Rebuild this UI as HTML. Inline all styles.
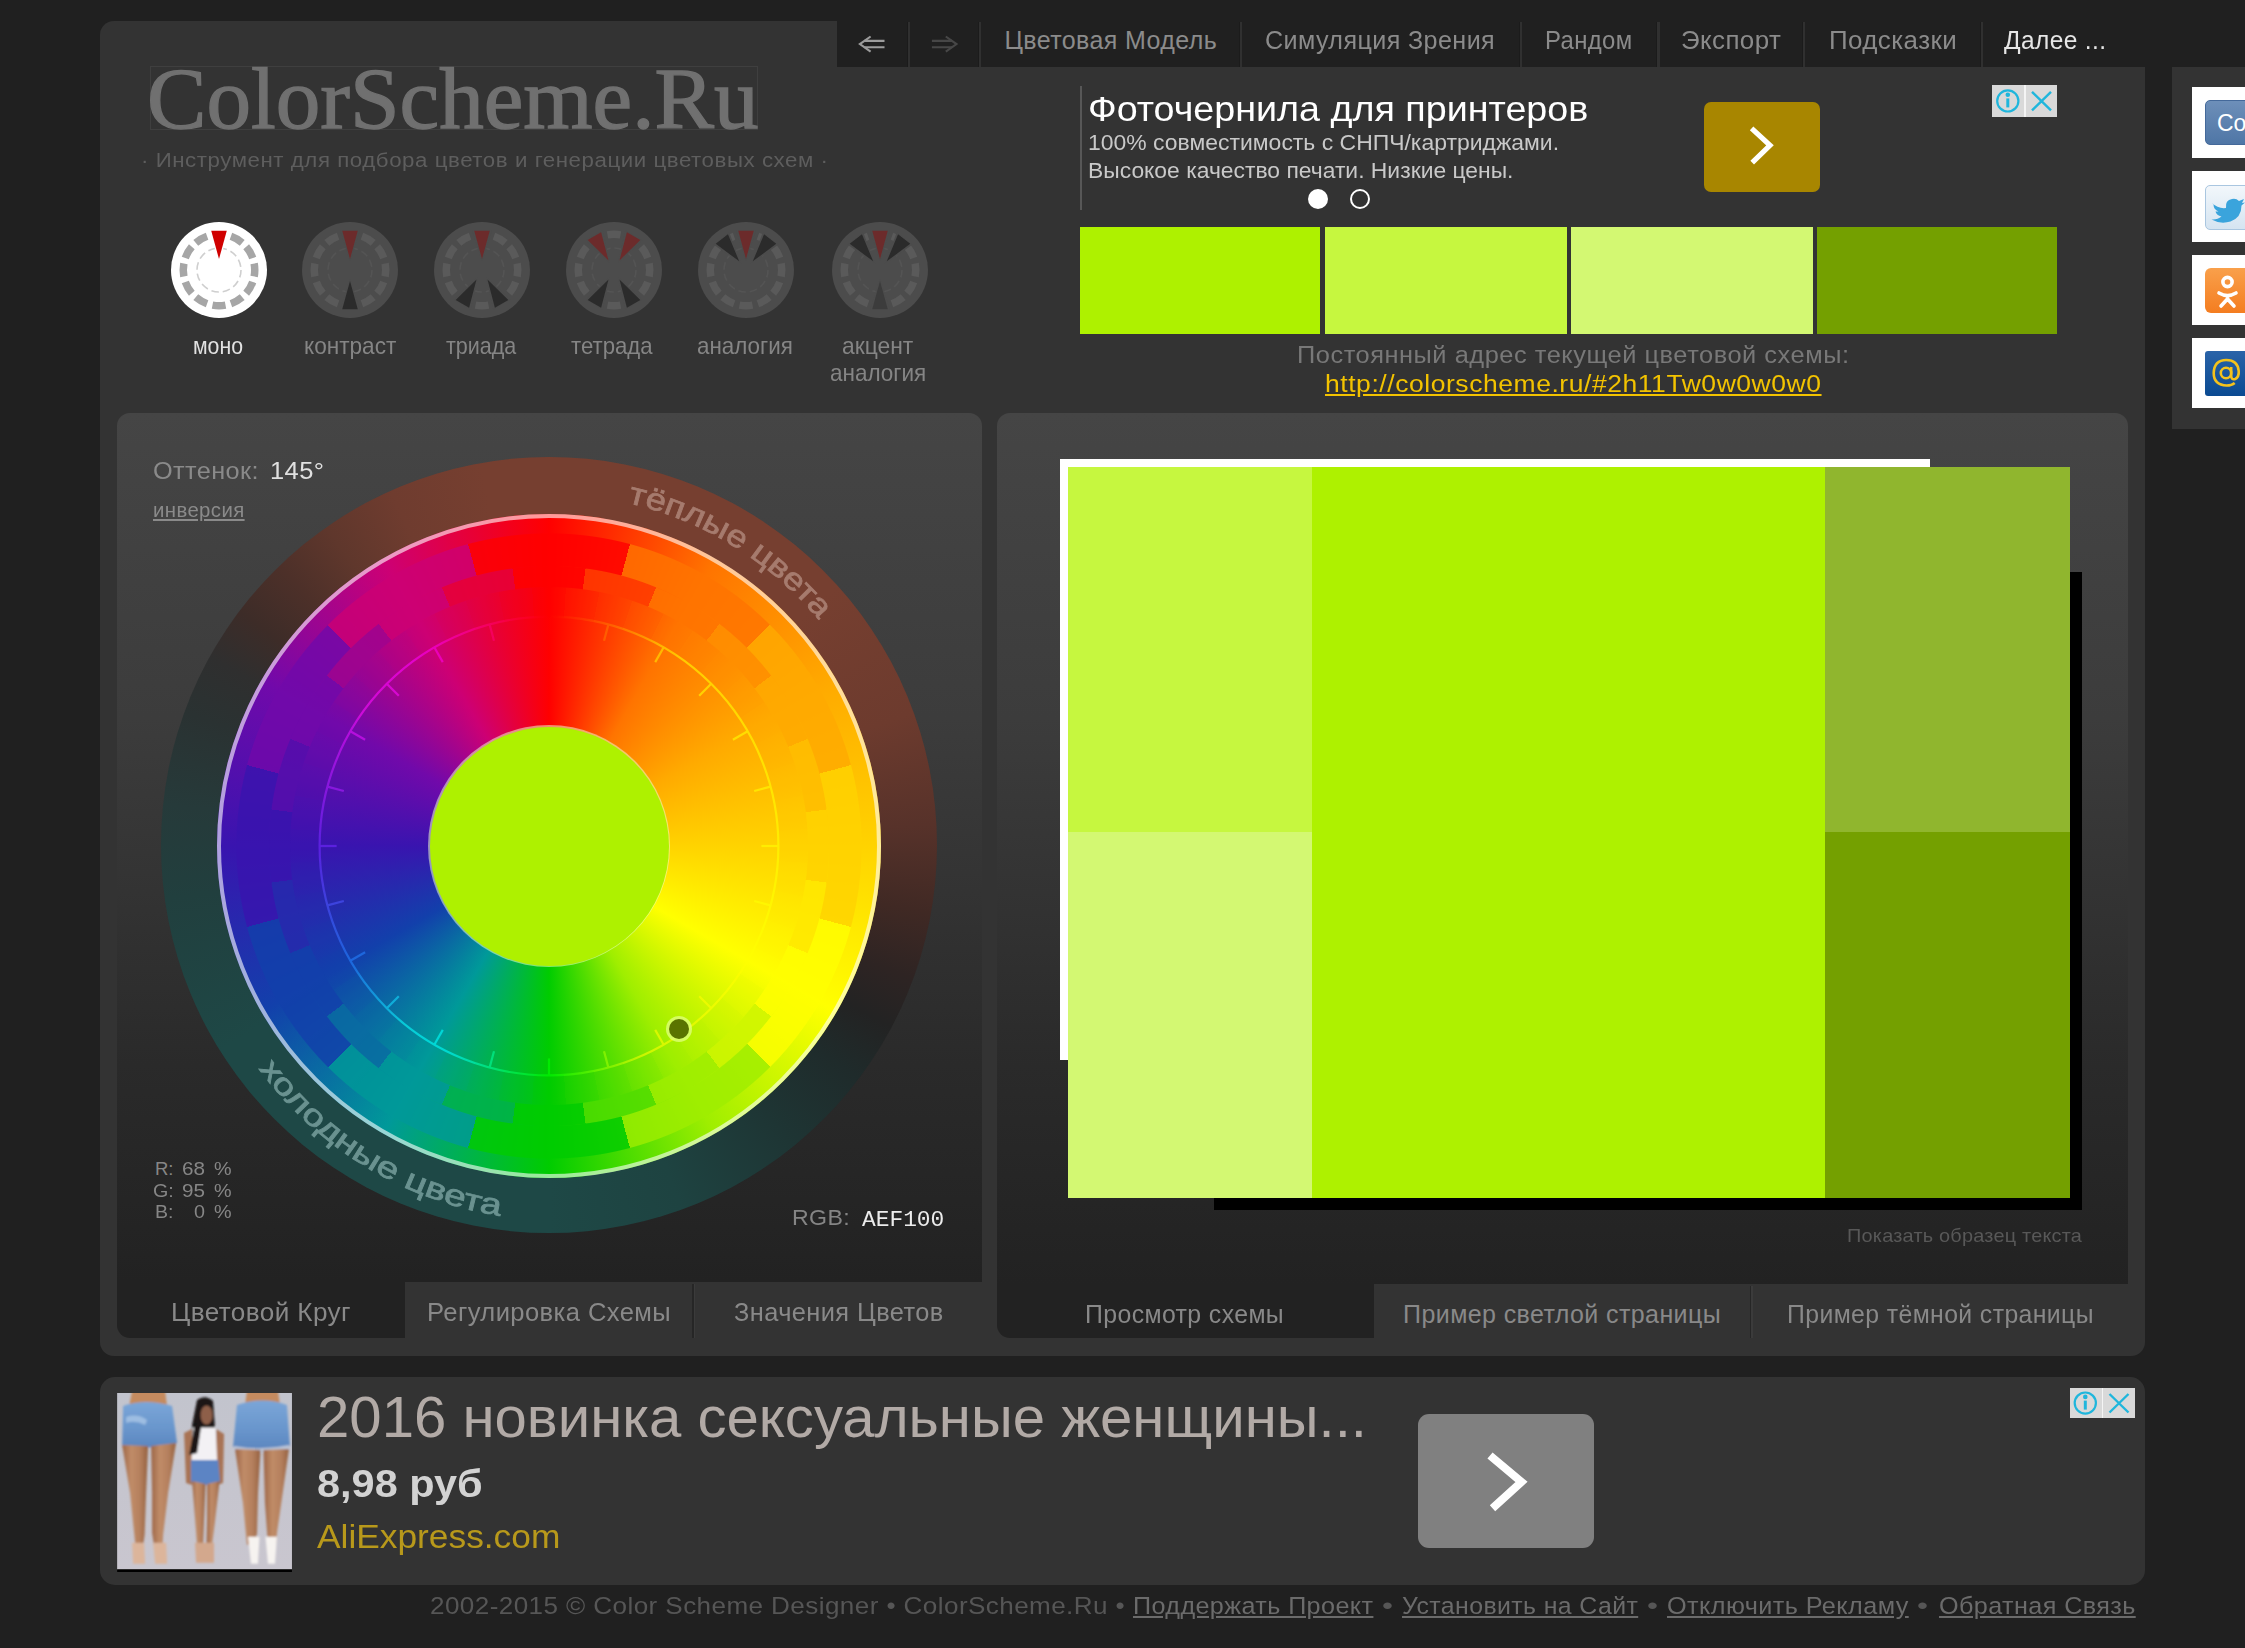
<!DOCTYPE html>
<html lang="ru"><head><meta charset="utf-8"><title>ColorScheme.Ru</title><style>
html,body{margin:0;padding:0}
body{width:2245px;height:1648px;overflow:hidden;background:#202020;position:relative;font-family:"Liberation Sans",sans-serif}
.abs{position:absolute}
.t{position:absolute;white-space:pre;line-height:1;transform-origin:0 0;display:block}
</style></head><body>
<div class="abs" style="left:100px;top:20.5px;width:2045px;height:1335px;background:#333333;border-radius:14px"></div>
<div class="abs" style="left:836.7px;top:0px;width:1408.3px;height:66.8px;background:#202020"></div>
<div class="abs" style="left:906.6px;top:21.5px;width:1.2px;height:45.3px;background:#1b1b1b"></div>
<div class="abs" style="left:907.8px;top:21.5px;width:2.2px;height:45.3px;background:#303030"></div>
<div class="abs" style="left:977.8px;top:21.5px;width:1.2px;height:45.3px;background:#1b1b1b"></div>
<div class="abs" style="left:979px;top:21.5px;width:2.2px;height:45.3px;background:#303030"></div>
<div class="abs" style="left:1238.5px;top:21.5px;width:1.2px;height:45.3px;background:#1b1b1b"></div>
<div class="abs" style="left:1239.7px;top:21.5px;width:2.2px;height:45.3px;background:#303030"></div>
<div class="abs" style="left:1518.6px;top:21.5px;width:1.2px;height:45.3px;background:#1b1b1b"></div>
<div class="abs" style="left:1519.8px;top:21.5px;width:2.2px;height:45.3px;background:#303030"></div>
<div class="abs" style="left:1656.2px;top:21.5px;width:1.2px;height:45.3px;background:#1b1b1b"></div>
<div class="abs" style="left:1657.4px;top:21.5px;width:2.2px;height:45.3px;background:#303030"></div>
<div class="abs" style="left:1801.8px;top:21.5px;width:1.2px;height:45.3px;background:#1b1b1b"></div>
<div class="abs" style="left:1803px;top:21.5px;width:2.2px;height:45.3px;background:#303030"></div>
<div class="abs" style="left:1979.5px;top:21.5px;width:1.2px;height:45.3px;background:#1b1b1b"></div>
<div class="abs" style="left:1980.7px;top:21.5px;width:2.2px;height:45.3px;background:#303030"></div>
<div class="abs" style="left:2172px;top:66.8px;width:73px;height:362.6px;background:#333333"></div>
<div class="abs" style="left:2192.2px;top:87.1px;width:52.8px;height:71.4px;background:#ffffff"></div>
<div class="abs" style="left:2192.2px;top:171.2px;width:52.8px;height:70.6px;background:#ffffff"></div>
<div class="abs" style="left:2192.2px;top:254.8px;width:52.8px;height:70.1px;background:#ffffff"></div>
<div class="abs" style="left:2192.2px;top:337.6px;width:52.8px;height:70.9px;background:#ffffff"></div>
<div class="abs" style="left:2205px;top:100.4px;width:45px;height:44.8px;background:linear-gradient(#6d8fb9,#4f76a6);border-radius:5px;border:1px solid #44699a;box-sizing:border-box"></div>
<div class="abs" style="left:2205px;top:184.5px;width:45px;height:45px;background:linear-gradient(#f2f7fb,#d5e4f1);border-radius:5px;border:1px solid #a9c6e0;box-sizing:border-box"></div>
<div class="abs" style="left:2205px;top:267.5px;width:45px;height:45px;background:linear-gradient(#f9a04b,#f47d20);border-radius:6px"></div>
<div class="abs" style="left:2205px;top:351px;width:45px;height:45px;background:linear-gradient(#2a63a8,#0a4a92);border-radius:3px"></div>
<div class="abs" style="left:150px;top:65.5px;width:607.5px;height:64.5px;border:1px solid #3f3f3f;box-sizing:border-box"></div>
<div class="abs" style="left:1080px;top:85.5px;width:1.5px;height:124.8px;background:#575757"></div>
<div class="abs" style="left:1704.3px;top:101.8px;width:115.3px;height:90.2px;background:#a88600;border-radius:7px"></div>
<div class="abs" style="left:1992px;top:85.3px;width:65.4px;height:31.5px;background:#d9d9d9"></div>
<div class="abs" style="left:2024.2px;top:85.3px;width:1.8px;height:31.5px;background:#f4f4f4"></div>
<div class="abs" style="left:1308.4px;top:188.8px;width:20px;height:20px;background:#ffffff;border-radius:50%"></div>
<div class="abs" style="left:1350.1px;top:188.8px;width:20px;height:20px;border:2.2px solid #ffffff;border-radius:50%;box-sizing:border-box"></div>
<div class="abs" style="left:1080.4px;top:227px;width:240.1px;height:106.6px;background:#AEF100"></div>
<div class="abs" style="left:1325px;top:227px;width:241.8px;height:106.6px;background:#C6F73F"></div>
<div class="abs" style="left:1571.2px;top:227px;width:241.8px;height:106.6px;background:#D3F872"></div>
<div class="abs" style="left:1817.4px;top:227px;width:239.8px;height:106.6px;background:#74A000"></div>
<div class="abs" style="left:116.7px;top:412.7px;width:865.3px;height:869.5px;background:linear-gradient(#454545,#3c3c3c 35%,#2a2a2a 75%,#222222);border-radius:13px 13px 0 0"></div>
<div class="abs" style="left:116.7px;top:1282px;width:288px;height:56.2px;background:#222222;border-radius:0 0 0 13px"></div>
<div class="abs" style="left:692.2px;top:1284px;width:1.4px;height:54px;background:#262626"></div>
<div class="abs" style="left:693.6px;top:1284px;width:1.4px;height:54px;background:#3b3b3b"></div>
<div class="abs" style="left:997.3px;top:412.7px;width:1131.2px;height:871.5px;background:linear-gradient(#454545,#3c3c3c 35%,#2a2a2a 75%,#222222);border-radius:13px 13px 0 0"></div>
<div class="abs" style="left:997.3px;top:1284px;width:376.9px;height:53.8px;background:#222222;border-radius:0 0 0 13px"></div>
<div class="abs" style="left:1749.8px;top:1286px;width:1.4px;height:52px;background:#262626"></div>
<div class="abs" style="left:1751.2px;top:1286px;width:1.4px;height:52px;background:#3b3b3b"></div>
<div class="abs" style="left:1214.2px;top:571.7px;width:868.1px;height:637.9px;background:#000000"></div>
<div class="abs" style="left:1059.8px;top:458.7px;width:870.2px;height:601.1px;background:#ffffff"></div>
<div class="abs" style="left:1068.1px;top:467.3px;width:243.9px;height:364.7px;background:#C6F73F"></div>
<div class="abs" style="left:1068.1px;top:832px;width:243.9px;height:365.7px;background:#D3F872"></div>
<div class="abs" style="left:1312px;top:467.3px;width:513.4px;height:730.4px;background:#AEF100"></div>
<div class="abs" style="left:1825.4px;top:467.3px;width:244.5px;height:364.7px;background:#90B62E"></div>
<div class="abs" style="left:1825.4px;top:832px;width:244.5px;height:365.7px;background:#74A000"></div>
<div class="abs" style="left:100px;top:1377.1px;width:2045px;height:207.6px;background:#333333;border-radius:15px"></div>
<div class="abs" style="left:1418.3px;top:1414.2px;width:175.5px;height:133.5px;background:#808080;border-radius:11px"></div>
<div class="abs" style="left:2069.5px;top:1387.5px;width:65.3px;height:30.6px;background:#d9d9d9"></div>
<div class="abs" style="left:2101.6px;top:1387.5px;width:1.8px;height:30.6px;background:#f4f4f4"></div>
<svg class="abs" style="left:169.1px;top:220px" width="100" height="100" viewBox="-50 -50 100 100"><circle r="48" fill="#ffffff"/><path d="M13.19 -37.23A39.5 39.5 0 0 1 25.65 -30.04L20.78 -24.33A32 32 0 0 0 10.68 -30.16Z" fill="#a6a6a6"/><path d="M30.04 -25.65A39.5 39.5 0 0 1 37.23 -13.19L30.16 -10.68A32 32 0 0 0 24.33 -20.78Z" fill="#a6a6a6"/><path d="M38.84 -7.20A39.5 39.5 0 0 1 38.84 7.20L31.46 5.83A32 32 0 0 0 31.46 -5.83Z" fill="#a6a6a6"/><path d="M37.23 13.19A39.5 39.5 0 0 1 30.04 25.65L24.33 20.78A32 32 0 0 0 30.16 10.68Z" fill="#a6a6a6"/><path d="M25.65 30.04A39.5 39.5 0 0 1 13.19 37.23L10.68 30.16A32 32 0 0 0 20.78 24.33Z" fill="#a6a6a6"/><path d="M7.20 38.84A39.5 39.5 0 0 1 -7.20 38.84L-5.83 31.46A32 32 0 0 0 5.83 31.46Z" fill="#a6a6a6"/><path d="M-13.19 37.23A39.5 39.5 0 0 1 -25.65 30.04L-20.78 24.33A32 32 0 0 0 -10.68 30.16Z" fill="#a6a6a6"/><path d="M-30.04 25.65A39.5 39.5 0 0 1 -37.23 13.19L-30.16 10.68A32 32 0 0 0 -24.33 20.78Z" fill="#a6a6a6"/><path d="M-38.84 7.20A39.5 39.5 0 0 1 -38.84 -7.20L-31.46 -5.83A32 32 0 0 0 -31.46 5.83Z" fill="#a6a6a6"/><path d="M-37.23 -13.19A39.5 39.5 0 0 1 -30.04 -25.65L-24.33 -20.78A32 32 0 0 0 -30.16 -10.68Z" fill="#a6a6a6"/><path d="M-25.65 -30.04A39.5 39.5 0 0 1 -13.19 -37.23L-10.68 -30.16A32 32 0 0 0 -20.78 -24.33Z" fill="#a6a6a6"/><circle r="22" fill="none" stroke="#cfcfcf" stroke-width="1.6" stroke-dasharray="7.5 4"/><path d="M-9.92 -39.78L9.92 -39.78L0.00 -8.00Z" fill="#ffffff"/><path d="M-7.77 -39.24L7.77 -39.24L0.00 -11.00Z" fill="#d00000"/></svg>
<svg class="abs" style="left:300.3px;top:220px" width="100" height="100" viewBox="-50 -50 100 100"><circle r="48" fill="#4c4c4c"/><path d="M13.19 -37.23A39.5 39.5 0 0 1 25.65 -30.04L20.78 -24.33A32 32 0 0 0 10.68 -30.16Z" fill="#5a5a5a"/><path d="M30.04 -25.65A39.5 39.5 0 0 1 37.23 -13.19L30.16 -10.68A32 32 0 0 0 24.33 -20.78Z" fill="#5a5a5a"/><path d="M38.84 -7.20A39.5 39.5 0 0 1 38.84 7.20L31.46 5.83A32 32 0 0 0 31.46 -5.83Z" fill="#5a5a5a"/><path d="M37.23 13.19A39.5 39.5 0 0 1 30.04 25.65L24.33 20.78A32 32 0 0 0 30.16 10.68Z" fill="#5a5a5a"/><path d="M25.65 30.04A39.5 39.5 0 0 1 13.19 37.23L10.68 30.16A32 32 0 0 0 20.78 24.33Z" fill="#5a5a5a"/><path d="M-13.19 37.23A39.5 39.5 0 0 1 -25.65 30.04L-20.78 24.33A32 32 0 0 0 -10.68 30.16Z" fill="#5a5a5a"/><path d="M-30.04 25.65A39.5 39.5 0 0 1 -37.23 13.19L-30.16 10.68A32 32 0 0 0 -24.33 20.78Z" fill="#5a5a5a"/><path d="M-38.84 7.20A39.5 39.5 0 0 1 -38.84 -7.20L-31.46 -5.83A32 32 0 0 0 -31.46 5.83Z" fill="#5a5a5a"/><path d="M-37.23 -13.19A39.5 39.5 0 0 1 -30.04 -25.65L-24.33 -20.78A32 32 0 0 0 -30.16 -10.68Z" fill="#5a5a5a"/><path d="M-25.65 -30.04A39.5 39.5 0 0 1 -13.19 -37.23L-10.68 -30.16A32 32 0 0 0 -20.78 -24.33Z" fill="#5a5a5a"/><circle r="22" fill="none" stroke="#545454" stroke-width="1.6" stroke-dasharray="7.5 4"/><path d="M-9.92 -39.78L9.92 -39.78L0.00 -8.00Z" fill="#4c4c4c"/><path d="M-7.77 -39.24L7.77 -39.24L0.00 -11.00Z" fill="#6c2b2b"/><path d="M9.92 39.78L-9.92 39.78L0.00 8.00Z" fill="#4c4c4c"/><path d="M7.77 39.24L-7.77 39.24L0.00 11.00Z" fill="#2b2b2b"/></svg>
<svg class="abs" style="left:432px;top:220px" width="100" height="100" viewBox="-50 -50 100 100"><circle r="48" fill="#4c4c4c"/><path d="M13.19 -37.23A39.5 39.5 0 0 1 25.65 -30.04L20.78 -24.33A32 32 0 0 0 10.68 -30.16Z" fill="#5a5a5a"/><path d="M30.04 -25.65A39.5 39.5 0 0 1 37.23 -13.19L30.16 -10.68A32 32 0 0 0 24.33 -20.78Z" fill="#5a5a5a"/><path d="M38.84 -7.20A39.5 39.5 0 0 1 38.84 7.20L31.46 5.83A32 32 0 0 0 31.46 -5.83Z" fill="#5a5a5a"/><path d="M37.23 13.19A39.5 39.5 0 0 1 30.04 25.65L24.33 20.78A32 32 0 0 0 30.16 10.68Z" fill="#5a5a5a"/><path d="M7.20 38.84A39.5 39.5 0 0 1 -7.20 38.84L-5.83 31.46A32 32 0 0 0 5.83 31.46Z" fill="#5a5a5a"/><path d="M-30.04 25.65A39.5 39.5 0 0 1 -37.23 13.19L-30.16 10.68A32 32 0 0 0 -24.33 20.78Z" fill="#5a5a5a"/><path d="M-38.84 7.20A39.5 39.5 0 0 1 -38.84 -7.20L-31.46 -5.83A32 32 0 0 0 -31.46 5.83Z" fill="#5a5a5a"/><path d="M-37.23 -13.19A39.5 39.5 0 0 1 -30.04 -25.65L-24.33 -20.78A32 32 0 0 0 -30.16 -10.68Z" fill="#5a5a5a"/><path d="M-25.65 -30.04A39.5 39.5 0 0 1 -13.19 -37.23L-10.68 -30.16A32 32 0 0 0 -20.78 -24.33Z" fill="#5a5a5a"/><circle r="22" fill="none" stroke="#545454" stroke-width="1.6" stroke-dasharray="7.5 4"/><path d="M-9.92 -39.78L9.92 -39.78L0.00 -8.00Z" fill="#4c4c4c"/><path d="M-7.77 -39.24L7.77 -39.24L0.00 -11.00Z" fill="#6c2b2b"/><path d="M28.48 29.49L11.30 39.41L4.00 6.93Z" fill="#4c4c4c"/><path d="M26.35 30.10L12.89 37.87L5.50 9.53Z" fill="#2b2b2b"/><path d="M-11.30 39.41L-28.48 29.49L-4.00 6.93Z" fill="#4c4c4c"/><path d="M-12.89 37.87L-26.35 30.10L-5.50 9.53Z" fill="#2b2b2b"/></svg>
<svg class="abs" style="left:563.8px;top:220px" width="100" height="100" viewBox="-50 -50 100 100"><circle r="48" fill="#4c4c4c"/><path d="M-7.20 -38.84A39.5 39.5 0 0 1 7.20 -38.84L5.83 -31.46A32 32 0 0 0 -5.83 -31.46Z" fill="#5a5a5a"/><path d="M30.04 -25.65A39.5 39.5 0 0 1 37.23 -13.19L30.16 -10.68A32 32 0 0 0 24.33 -20.78Z" fill="#5a5a5a"/><path d="M38.84 -7.20A39.5 39.5 0 0 1 38.84 7.20L31.46 5.83A32 32 0 0 0 31.46 -5.83Z" fill="#5a5a5a"/><path d="M37.23 13.19A39.5 39.5 0 0 1 30.04 25.65L24.33 20.78A32 32 0 0 0 30.16 10.68Z" fill="#5a5a5a"/><path d="M7.20 38.84A39.5 39.5 0 0 1 -7.20 38.84L-5.83 31.46A32 32 0 0 0 5.83 31.46Z" fill="#5a5a5a"/><path d="M-30.04 25.65A39.5 39.5 0 0 1 -37.23 13.19L-30.16 10.68A32 32 0 0 0 -24.33 20.78Z" fill="#5a5a5a"/><path d="M-38.84 7.20A39.5 39.5 0 0 1 -38.84 -7.20L-31.46 -5.83A32 32 0 0 0 -31.46 5.83Z" fill="#5a5a5a"/><path d="M-37.23 -13.19A39.5 39.5 0 0 1 -30.04 -25.65L-24.33 -20.78A32 32 0 0 0 -30.16 -10.68Z" fill="#5a5a5a"/><circle r="22" fill="none" stroke="#545454" stroke-width="1.6" stroke-dasharray="7.5 4"/><path d="M-28.48 -29.49L-11.30 -39.41L-4.00 -6.93Z" fill="#4c4c4c"/><path d="M-26.35 -30.10L-12.89 -37.87L-5.50 -9.53Z" fill="#6c2b2b"/><path d="M11.30 -39.41L28.48 -29.49L4.00 -6.93Z" fill="#4c4c4c"/><path d="M12.89 -37.87L26.35 -30.10L5.50 -9.53Z" fill="#6c2b2b"/><path d="M28.48 29.49L11.30 39.41L4.00 6.93Z" fill="#4c4c4c"/><path d="M26.35 30.10L12.89 37.87L5.50 9.53Z" fill="#2b2b2b"/><path d="M-11.30 39.41L-28.48 29.49L-4.00 6.93Z" fill="#4c4c4c"/><path d="M-12.89 37.87L-26.35 30.10L-5.50 9.53Z" fill="#2b2b2b"/></svg>
<svg class="abs" style="left:696px;top:220px" width="100" height="100" viewBox="-50 -50 100 100"><circle r="48" fill="#4c4c4c"/><path d="M13.19 -37.23A39.5 39.5 0 0 1 25.65 -30.04L20.78 -24.33A32 32 0 0 0 10.68 -30.16Z" fill="#5a5a5a"/><path d="M30.04 -25.65A39.5 39.5 0 0 1 37.23 -13.19L30.16 -10.68A32 32 0 0 0 24.33 -20.78Z" fill="#5a5a5a"/><path d="M38.84 -7.20A39.5 39.5 0 0 1 38.84 7.20L31.46 5.83A32 32 0 0 0 31.46 -5.83Z" fill="#5a5a5a"/><path d="M37.23 13.19A39.5 39.5 0 0 1 30.04 25.65L24.33 20.78A32 32 0 0 0 30.16 10.68Z" fill="#5a5a5a"/><path d="M25.65 30.04A39.5 39.5 0 0 1 13.19 37.23L10.68 30.16A32 32 0 0 0 20.78 24.33Z" fill="#5a5a5a"/><path d="M7.20 38.84A39.5 39.5 0 0 1 -7.20 38.84L-5.83 31.46A32 32 0 0 0 5.83 31.46Z" fill="#5a5a5a"/><path d="M-13.19 37.23A39.5 39.5 0 0 1 -25.65 30.04L-20.78 24.33A32 32 0 0 0 -10.68 30.16Z" fill="#5a5a5a"/><path d="M-30.04 25.65A39.5 39.5 0 0 1 -37.23 13.19L-30.16 10.68A32 32 0 0 0 -24.33 20.78Z" fill="#5a5a5a"/><path d="M-38.84 7.20A39.5 39.5 0 0 1 -38.84 -7.20L-31.46 -5.83A32 32 0 0 0 -31.46 5.83Z" fill="#5a5a5a"/><path d="M-37.23 -13.19A39.5 39.5 0 0 1 -30.04 -25.65L-24.33 -20.78A32 32 0 0 0 -30.16 -10.68Z" fill="#5a5a5a"/><path d="M-25.65 -30.04A39.5 39.5 0 0 1 -13.19 -37.23L-10.68 -30.16A32 32 0 0 0 -20.78 -24.33Z" fill="#5a5a5a"/><circle r="22" fill="none" stroke="#545454" stroke-width="1.6" stroke-dasharray="7.5 4"/><path d="M-9.92 -39.78L9.92 -39.78L0.00 -8.00Z" fill="#4c4c4c"/><path d="M-7.77 -39.24L7.77 -39.24L0.00 -11.00Z" fill="#6c2b2b"/><path d="M-32.31 -25.24L-16.68 -37.46L-4.93 -6.30Z" fill="#4c4c4c"/><path d="M-30.28 -26.14L-18.04 -35.70L-6.77 -8.67Z" fill="#2b2b2b"/><path d="M16.68 -37.46L32.31 -25.24L4.93 -6.30Z" fill="#4c4c4c"/><path d="M18.04 -35.70L30.28 -26.14L6.77 -8.67Z" fill="#2b2b2b"/></svg>
<svg class="abs" style="left:829.6px;top:220px" width="100" height="100" viewBox="-50 -50 100 100"><circle r="48" fill="#4c4c4c"/><path d="M13.19 -37.23A39.5 39.5 0 0 1 25.65 -30.04L20.78 -24.33A32 32 0 0 0 10.68 -30.16Z" fill="#5a5a5a"/><path d="M30.04 -25.65A39.5 39.5 0 0 1 37.23 -13.19L30.16 -10.68A32 32 0 0 0 24.33 -20.78Z" fill="#5a5a5a"/><path d="M38.84 -7.20A39.5 39.5 0 0 1 38.84 7.20L31.46 5.83A32 32 0 0 0 31.46 -5.83Z" fill="#5a5a5a"/><path d="M37.23 13.19A39.5 39.5 0 0 1 30.04 25.65L24.33 20.78A32 32 0 0 0 30.16 10.68Z" fill="#5a5a5a"/><path d="M25.65 30.04A39.5 39.5 0 0 1 13.19 37.23L10.68 30.16A32 32 0 0 0 20.78 24.33Z" fill="#5a5a5a"/><path d="M-13.19 37.23A39.5 39.5 0 0 1 -25.65 30.04L-20.78 24.33A32 32 0 0 0 -10.68 30.16Z" fill="#5a5a5a"/><path d="M-30.04 25.65A39.5 39.5 0 0 1 -37.23 13.19L-30.16 10.68A32 32 0 0 0 -24.33 20.78Z" fill="#5a5a5a"/><path d="M-38.84 7.20A39.5 39.5 0 0 1 -38.84 -7.20L-31.46 -5.83A32 32 0 0 0 -31.46 5.83Z" fill="#5a5a5a"/><path d="M-37.23 -13.19A39.5 39.5 0 0 1 -30.04 -25.65L-24.33 -20.78A32 32 0 0 0 -30.16 -10.68Z" fill="#5a5a5a"/><path d="M-25.65 -30.04A39.5 39.5 0 0 1 -13.19 -37.23L-10.68 -30.16A32 32 0 0 0 -20.78 -24.33Z" fill="#5a5a5a"/><circle r="22" fill="none" stroke="#545454" stroke-width="1.6" stroke-dasharray="7.5 4"/><path d="M-9.92 -39.78L9.92 -39.78L0.00 -8.00Z" fill="#4c4c4c"/><path d="M-7.77 -39.24L7.77 -39.24L0.00 -11.00Z" fill="#6c2b2b"/><path d="M-32.31 -25.24L-16.68 -37.46L-4.93 -6.30Z" fill="#4c4c4c"/><path d="M-30.28 -26.14L-18.04 -35.70L-6.77 -8.67Z" fill="#2b2b2b"/><path d="M16.68 -37.46L32.31 -25.24L4.93 -6.30Z" fill="#4c4c4c"/><path d="M18.04 -35.70L30.28 -26.14L6.77 -8.67Z" fill="#2b2b2b"/><path d="M9.92 39.78L-9.92 39.78L0.00 8.00Z" fill="#4c4c4c"/><path d="M7.77 39.24L-7.77 39.24L0.00 11.00Z" fill="#3c3c3c"/></svg>
<div class="abs" style="left:149px;top:446px;width:800px;height:800px;isolation:isolate">
<div class="abs" style="left:11.8px;top:10.5px;width:776.4px;height:776.4px;border-radius:50%;background:conic-gradient(from 0deg,#763F30 0deg,#763F30 48deg,#6D3B2E 70deg,#57322A 87deg,#402924 100deg,#2E2423 110deg,#232323 118deg,#1F2B2B 127deg,#1E3534 141deg,#1E4341 160deg,#1E4846 180deg,#1E4846 238deg,#213F3E 262deg,#263A3A 276deg,#2A3232 290deg,#2F2F2F 299deg,#3D2C28 307deg,#4D3029 316deg,#5F372C 325deg,#6F3C2F 336deg,#763F30 350deg,#763F30 360deg)"></div>
<div class="abs" style="left:68px;top:68px;width:664px;height:664px;border-radius:50%;background:conic-gradient(from 0deg,#FF0000 0deg,#FF7400 30deg,#FFAA00 60deg,#FFD300 90deg,#FFFF00 120deg,#9FEE00 150deg,#00CC00 180deg,#009999 210deg,#1240AB 240deg,#3914AF 270deg,#7109AA 300deg,#CD0074 330deg,#FF0000 360deg)"></div>
<div class="abs" style="left:68px;top:68px;width:664px;height:664px;border-radius:50%;background:conic-gradient(from -3.75deg,#FF0000 0deg 7.5deg,#FF1D00 7.5deg 15deg,#FF3A00 15deg 22.5deg,#FF5700 22.5deg 30deg,#FF7400 30deg 37.5deg,#FF8200 37.5deg 45deg,#FF8F00 45deg 52.5deg,#FF9C00 52.5deg 60deg,#FFAA00 60deg 67.5deg,#FFB400 67.5deg 75deg,#FFBE00 75deg 82.5deg,#FFC900 82.5deg 90deg,#FFD300 90deg 97.5deg,#FFDE00 97.5deg 105deg,#FFE900 105deg 112.5deg,#FFF400 112.5deg 120deg,#FFFF00 120deg 127.5deg,#E7FB00 127.5deg 135deg,#CFF600 135deg 142.5deg,#B7F200 142.5deg 150deg,#9FEE00 150deg 157.5deg,#77E600 157.5deg 165deg,#50DD00 165deg 172.5deg,#28D400 172.5deg 180deg,#00CC00 180deg 187.5deg,#00BF26 187.5deg 195deg,#00B24C 195deg 202.5deg,#00A673 202.5deg 210deg,#009999 210deg 217.5deg,#04839E 217.5deg 225deg,#096CA2 225deg 232.5deg,#0E56A6 232.5deg 240deg,#1240AB 240deg 247.5deg,#1C35AC 247.5deg 255deg,#262AAD 255deg 262.5deg,#2F1FAE 262.5deg 270deg,#3914AF 270deg 277.5deg,#4711AE 277.5deg 285deg,#550EAC 285deg 292.5deg,#630CAB 292.5deg 300deg,#7109AA 300deg 307.5deg,#88079C 307.5deg 315deg,#9F048F 315deg 322.5deg,#B60282 322.5deg 330deg,#CD0074 330deg 337.5deg,#DA0057 337.5deg 345deg,#E6003A 345deg 352.5deg,#F2001D 352.5deg 360deg);opacity:.15;-webkit-mask-image:radial-gradient(circle closest-side,transparent 228.5px,#000 229.5px,#000 258.5px,transparent 259.5px);mask-image:radial-gradient(circle closest-side,transparent 228.5px,#000 229.5px,#000 258.5px,transparent 259.5px);"></div>
<div class="abs" style="left:68px;top:68px;width:664px;height:664px;border-radius:50%;background:conic-gradient(from -7.5deg,#FF0000 0deg 15deg,#FF3A00 15deg 30deg,#FF7400 30deg 45deg,#FF8F00 45deg 60deg,#FFAA00 60deg 75deg,#FFBE00 75deg 90deg,#FFD300 90deg 105deg,#FFE900 105deg 120deg,#FFFF00 120deg 135deg,#CFF600 135deg 150deg,#9FEE00 150deg 165deg,#50DD00 165deg 180deg,#00CC00 180deg 195deg,#00B24C 195deg 210deg,#009999 210deg 225deg,#096CA2 225deg 240deg,#1240AB 240deg 255deg,#262AAD 255deg 270deg,#3914AF 270deg 285deg,#550EAC 285deg 300deg,#7109AA 300deg 315deg,#9F048F 315deg 330deg,#CD0074 330deg 345deg,#E6003A 345deg 360deg);opacity:.8;-webkit-mask-image:radial-gradient(circle closest-side,transparent 258.5px,#000 259.5px,#000 279.5px,transparent 280.5px);mask-image:radial-gradient(circle closest-side,transparent 258.5px,#000 259.5px,#000 279.5px,transparent 280.5px);"></div>
<div class="abs" style="left:68px;top:68px;width:664px;height:664px;border-radius:50%;background:conic-gradient(from -15deg,#FF0000 0deg 30deg,#FF7400 30deg 60deg,#FFAA00 60deg 90deg,#FFD300 90deg 120deg,#FFFF00 120deg 150deg,#9FEE00 150deg 180deg,#00CC00 180deg 210deg,#009999 210deg 240deg,#1240AB 240deg 270deg,#3914AF 270deg 300deg,#7109AA 300deg 330deg,#CD0074 330deg 360deg);opacity:.8;-webkit-mask-image:radial-gradient(circle closest-side,transparent 279.5px,#000 280.5px,#000 312.1px,transparent 313.1px);mask-image:radial-gradient(circle closest-side,transparent 279.5px,#000 280.5px,#000 312.1px,transparent 313.1px);"></div>
<div class="abs" style="left:68px;top:68px;width:664px;height:664px;border-radius:50%;box-sizing:border-box;border:4.4px solid rgba(255,255,255,.6)"></div>
<svg class="abs" style="left:0;top:0;mix-blend-mode:overlay;opacity:.6" width="800" height="800" viewBox="0 0 800 800"><circle cx="400" cy="400" r="229.4" fill="none" stroke="#fff" stroke-width="2.2"/><line x1="400.0" y1="170.6" x2="400.0" y2="187.6" stroke="#fff" stroke-width="2.2"/><line x1="459.4" y1="178.4" x2="455.0" y2="194.8" stroke="#fff" stroke-width="2.2"/><line x1="514.7" y1="201.3" x2="506.2" y2="216.1" stroke="#fff" stroke-width="2.2"/><line x1="562.2" y1="237.8" x2="550.2" y2="249.8" stroke="#fff" stroke-width="2.2"/><line x1="598.7" y1="285.3" x2="583.9" y2="293.8" stroke="#fff" stroke-width="2.2"/><line x1="621.6" y1="340.6" x2="605.2" y2="345.0" stroke="#fff" stroke-width="2.2"/><line x1="629.4" y1="400.0" x2="612.4" y2="400.0" stroke="#fff" stroke-width="2.2"/><line x1="621.6" y1="459.4" x2="605.2" y2="455.0" stroke="#fff" stroke-width="2.2"/><line x1="598.7" y1="514.7" x2="583.9" y2="506.2" stroke="#fff" stroke-width="2.2"/><line x1="562.2" y1="562.2" x2="550.2" y2="550.2" stroke="#fff" stroke-width="2.2"/><line x1="514.7" y1="598.7" x2="506.2" y2="583.9" stroke="#fff" stroke-width="2.2"/><line x1="459.4" y1="621.6" x2="455.0" y2="605.2" stroke="#fff" stroke-width="2.2"/><line x1="400.0" y1="629.4" x2="400.0" y2="612.4" stroke="#fff" stroke-width="2.2"/><line x1="340.6" y1="621.6" x2="345.0" y2="605.2" stroke="#fff" stroke-width="2.2"/><line x1="285.3" y1="598.7" x2="293.8" y2="583.9" stroke="#fff" stroke-width="2.2"/><line x1="237.8" y1="562.2" x2="249.8" y2="550.2" stroke="#fff" stroke-width="2.2"/><line x1="201.3" y1="514.7" x2="216.1" y2="506.2" stroke="#fff" stroke-width="2.2"/><line x1="178.4" y1="459.4" x2="194.8" y2="455.0" stroke="#fff" stroke-width="2.2"/><line x1="170.6" y1="400.0" x2="187.6" y2="400.0" stroke="#fff" stroke-width="2.2"/><line x1="178.4" y1="340.6" x2="194.8" y2="345.0" stroke="#fff" stroke-width="2.2"/><line x1="201.3" y1="285.3" x2="216.1" y2="293.8" stroke="#fff" stroke-width="2.2"/><line x1="237.8" y1="237.8" x2="249.8" y2="249.8" stroke="#fff" stroke-width="2.2"/><line x1="285.3" y1="201.3" x2="293.8" y2="216.1" stroke="#fff" stroke-width="2.2"/><line x1="340.6" y1="178.4" x2="345.0" y2="194.8" stroke="#fff" stroke-width="2.2"/></svg>
<div class="abs" style="left:279px;top:279px;width:242px;height:242px;border-radius:50%;background:#AEF100;box-sizing:border-box;border:3px solid rgba(235,255,200,.55);background-clip:padding-box"></div>
<div class="abs" style="left:280.5px;top:280.5px;width:239px;height:239px;border-radius:50%;background:#AEF100"></div>
<div class="abs" style="left:517.1px;top:570.3px;width:26px;height:26px;border-radius:50%;background:rgba(225,255,130,.75)"></div>
<div class="abs" style="left:520.1px;top:573.3px;width:20px;height:20px;border-radius:50%;background:#5A7400"></div>
<svg class="abs" style="left:0;top:0" width="800" height="800" viewBox="0 0 800 800"><defs><path id="pw" d="M478.6 56.9 A352 352 0 0 1 746.7 338.9"/><path id="pc" d="M109.7 622.7 A370 370 0 0 0 485.2 766.3"/></defs><text font-family="'Liberation Sans',sans-serif" font-size="31" fill="#A67B6E" stroke="#A67B6E" stroke-width=".75"><textPath href="#pw" textLength="228" lengthAdjust="spacingAndGlyphs">тёплые цвета</textPath></text><text font-family="'Liberation Sans',sans-serif" font-size="30" fill="#6A9290" stroke="#6A9290" stroke-width=".75"><textPath href="#pc" textLength="290" lengthAdjust="spacingAndGlyphs">холодные цвета</textPath></text></svg>
</div>
<svg class="abs" style="left:0;top:0" width="2245" height="1648" viewBox="0 0 2245 1648"><g fill="none" stroke="#9c9c9c" stroke-width="2.1"><path d="M884.5 40.9L864.4 40.9M884.5 47.3L864.4 47.3"/><path d="M870.6 36.5L859.9 44.1L870.6 51.7"/></g><g fill="none" stroke="#474747" stroke-width="2.1"><path d="M931.9 40.9L952.0 40.9M931.9 47.3L952.0 47.3"/><path d="M945.8 36.5L956.5 44.1L945.8 51.7"/></g><path d="M1751.6 128.3L1770 145.4L1752.2 162.6" fill="none" stroke="#fff" stroke-width="5.2"/><path d="M1490 1455.5L1521.5 1481.9L1492.5 1508.3" fill="none" stroke="#fff" stroke-width="8"/><g fill="none" stroke="#1fb6dc" stroke-width="2.2"><circle cx="2007.8" cy="100.9" r="10.6"/><path d="M2007.8 98.4V107.4" stroke-width="3"/><circle cx="2007.8" cy="94.7" r="1.2" fill="#1fb6dc"/><path d="M2032.0 91.8L2051.0 110.3M2051.0 91.8L2032.0 110.3" stroke-width="2.4"/></g><g fill="none" stroke="#1fb6dc" stroke-width="2.2"><circle cx="2085.3" cy="1403.1" r="10.6"/><path d="M2085.3 1400.6V1409.6" stroke-width="3"/><circle cx="2085.3" cy="1396.9" r="1.2" fill="#1fb6dc"/><path d="M2109.5 1394.0L2128.5 1412.5M2128.5 1394.0L2109.5 1412.5" stroke-width="2.4"/></g></svg>
<svg class="abs" style="left:117px;top:1392.7px" width="175.1" height="179.8" viewBox="0 0 175 180"><defs><filter id="bl" x="-10%" y="-10%" width="120%" height="120%"><feGaussianBlur stdDeviation="1.3"/></filter><clipPath id="cp"><rect width="175" height="176.6"/></clipPath><linearGradient id="sk" x1="0" x2="1" y1="0" y2="0"><stop offset="0" stop-color="#9c6547"/><stop offset=".35" stop-color="#c08c68"/><stop offset=".7" stop-color="#b47f5d"/><stop offset="1" stop-color="#94603f"/></linearGradient><linearGradient id="dn" x1="0" x2="0" y1="0" y2="1"><stop offset="0" stop-color="#7ba6d8"/><stop offset=".55" stop-color="#6a97cd"/><stop offset="1" stop-color="#5c86bf"/></linearGradient><linearGradient id="bg" x1="0" x2="0" y1="0" y2="1"><stop offset="0" stop-color="#c2c4cd"/><stop offset="1" stop-color="#c9c6cf"/></linearGradient></defs><rect width="175" height="176.6" fill="url(#bg)"/><g clip-path="url(#cp)" filter="url(#bl)"><path d="M15 -2H48L50 13H12Z" fill="#c58b5f"/><path d="M6 13Q28 5 55 13L60 50Q32 58 5 52Z" fill="url(#dn)"/><path d="M9 24Q20 20 30 27L28 32Q18 27 9 30Z" fill="#a9c6e6" opacity=".8"/><path d="M5 52L31 53L29 100L27.500 142L25 160H19L17 140L13 100Z" fill="url(#sk)"/><path d="M34 53L59 50L51 100L46 142L45 160H38L35 140L35 100Z" fill="url(#sk)"/><path d="M15 150H27L28 171H16ZM36 150H49L50 171H38Z" fill="#dcb59b"/><path d="M80 7Q88 1 96 8L98 36L91 40L80 74L72 72L75 32Z" fill="#1a1817"/><ellipse cx="89.500" cy="22" rx="6" ry="9.500" fill="#8e5e48"/><path d="M67 40L75 36L75 92L69 90ZM99 36L107 41L106 90L100 92Z" fill="#a87354"/><path d="M75.500 34.500L98.500 34.500L100 67H74.500Z" fill="#f3f1f4"/><path d="M78 30L84 34L80 60L72 62Z" fill="#1a1817"/><path d="M74 67H101L103 89Q88 95 74 89Z" fill="#5c84c4"/><path d="M75 88L88.500 91L87 128L86 152H80L78 125Z" fill="url(#sk)"/><path d="M90 91L102.500 88L98 128L95 152H89.500L90 125Z" fill="url(#sk)"/><path d="M78 150H97V170H79Z" fill="#d3a88d"/><path d="M130 -2H161L163 12H128Z" fill="#c58b5f"/><path d="M120 12Q146 3 170 12L173 53Q146 60 116 54Z" fill="url(#dn)"/><path d="M117 53Q145 58 172 52L172 56Q145 62 117 57Z" fill="#b9c3d6"/><path d="M118 56L143.500 57L141 100L140 140L138 152H130L126 110Z" fill="url(#sk)"/><path d="M146.500 57L172 56L165 105L160 140L159 152H151L148 110Z" fill="url(#sk)"/><path d="M131 144H142.500L141 171H134ZM148.500 144H160L158 171H151Z" fill="#f6f3f0"/></g><rect y="176.6" width="175" height="3.2" fill="#000"/></svg>
<svg class="abs" style="left:2200px;top:90px" width="45" height="320" viewBox="2200 90 45 320"><text x="2217" y="131" font-family='"Liberation Sans",sans-serif' font-size="23" fill="#fff">Co</text><path d="M2212 203q6 6 14 5q-1-8 6-9q4-1 7 2l5-2l-2 4l3-.5l-3.5 3q0 12-11 16q-10 3-19-2q6 .5 10-3q-5-1-6-5h3q-5-2-5-7z" fill="#3aa4dc"/><g fill="none" stroke="#fff" stroke-width="3.6" stroke-linecap="round"><circle cx="2227.5" cy="282" r="4.6"/><path d="M2219 293q8.500 5 17 0M2227.500 296v2M2221 306l6.500-7l6.500 7"/></g><g fill="none" stroke="#f4c21c" stroke-width="2.6"><circle cx="2226" cy="373" r="5.2"/><path d="M2231.200 367v9q0 4 4 3q4-2 3.500-8q-1-11-12.500-11q-12 0-12.500 13q0 12 13 12.500q5 0 8-2.500"/></g></svg>
<span class="t" style="left:1004.4px;top:27.6px;font-size:25px;color:#8b8b8b;letter-spacing:0.4px;">Цветовая Модель</span>
<span class="t" style="left:1264.8px;top:27.6px;font-size:25px;color:#8b8b8b;letter-spacing:0.4px;transform:scaleX(1.0050);">Симуляция Зрения</span>
<span class="t" style="left:1544.9px;top:27.6px;font-size:25px;color:#8b8b8b;letter-spacing:0.4px;transform:scaleX(0.9557);">Рандом</span>
<span class="t" style="left:1681.2px;top:27.6px;font-size:25px;color:#8b8b8b;letter-spacing:0.4px;transform:scaleX(1.0360);">Экспорт</span>
<span class="t" style="left:1828.7px;top:27.6px;font-size:25px;color:#8b8b8b;letter-spacing:0.4px;transform:scaleX(1.0374);">Подсказки</span>
<span class="t" style="left:2004.2px;top:27.6px;font-size:25px;color:#e6e6e6;letter-spacing:0.4px;transform:scaleX(0.9787);">Далее ...</span>
<span class="t" style="left:147.2px;top:56.3px;font-size:86px;color:#707070;font-family:'Liberation Serif', serif;transform:scaleX(1.0364);-webkit-text-stroke:1.3px #707070;">ColorScheme.Ru</span>
<span class="t" style="left:141.0px;top:149.9px;font-size:20px;color:#5e5e5e;letter-spacing:0.5px;transform:scaleX(1.1130);">· Инструмент для подбора цветов и генерации цветовых схем ·</span>
<span class="t" style="left:193.3px;top:334.2px;font-size:24px;color:#e2e2e2;transform:scaleX(0.8857);">моно</span>
<span class="t" style="left:303.6px;top:334.2px;font-size:24px;color:#858585;transform:scaleX(0.9412);">контраст</span>
<span class="t" style="left:445.8px;top:334.2px;font-size:24px;color:#858585;transform:scaleX(0.8961);">триада</span>
<span class="t" style="left:571.4px;top:334.2px;font-size:24px;color:#858585;transform:scaleX(0.9240);">тетрада</span>
<span class="t" style="left:696.5px;top:334.2px;font-size:24px;color:#858585;transform:scaleX(0.9325);">аналогия</span>
<span class="t" style="left:842.2px;top:334.2px;font-size:24px;color:#858585;transform:scaleX(0.9517);">акцент</span>
<span class="t" style="left:829.7px;top:361.0px;font-size:24px;color:#858585;transform:scaleX(0.9374);">аналогия</span>
<span class="t" style="left:1087.5px;top:90.6px;font-size:35px;color:#ffffff;transform:scaleX(1.0765);">Фоточернила для принтеров</span>
<span class="t" style="left:1088.0px;top:133.3px;font-size:21.5px;color:#c9c9c9;transform:scaleX(1.0674);">100% совместимость с СНПЧ/картриджами.</span>
<span class="t" style="left:1088.0px;top:160.8px;font-size:21.5px;color:#c9c9c9;transform:scaleX(1.0638);">Высокое качество печати. Низкие цены.</span>
<span class="t" style="left:1296.7px;top:343.5px;font-size:23.5px;color:#787878;letter-spacing:0.5px;transform:scaleX(1.0797);">Постоянный адрес текущей цветовой схемы:</span>
<span class="t" style="left:1325.3px;top:373.0px;font-size:23.5px;color:#f3c300;text-decoration:underline;letter-spacing:0.5px;transform:scaleX(1.1265);">http://colorscheme.ru/#2h11Tw0w0w0w0</span>
<span class="t" style="left:152.8px;top:459.1px;font-size:24.5px;color:#8a8a8a;letter-spacing:0.4px;transform:scaleX(1.0319);">Оттенок:</span>
<span class="t" style="left:270.2px;top:459.1px;font-size:24.5px;color:#e0e0e0;letter-spacing:0.4px;transform:scaleX(1.0408);">145°</span>
<span class="t" style="left:152.8px;top:500.2px;font-size:20.5px;color:#8a8a8a;text-decoration:underline;letter-spacing:0.4px;transform:scaleX(0.9929);">инверсия</span>
<span class="t" style="left:155.0px;top:1160.4px;font-size:18.5px;color:#868686;">R:</span>
<span class="t" style="left:182.1px;top:1160.4px;font-size:18.5px;color:#868686;transform:scaleX(1.1177);">68</span>
<span class="t" style="left:214.0px;top:1160.4px;font-size:18.5px;color:#868686;transform:scaleX(1.0697);">%</span>
<span class="t" style="left:152.7px;top:1181.8px;font-size:18.5px;color:#868686;transform:scaleX(1.0650);">G:</span>
<span class="t" style="left:182.1px;top:1181.8px;font-size:18.5px;color:#868686;transform:scaleX(1.1177);">95</span>
<span class="t" style="left:214.0px;top:1181.8px;font-size:18.5px;color:#868686;transform:scaleX(1.0697);">%</span>
<span class="t" style="left:155.0px;top:1202.5px;font-size:18.5px;color:#868686;transform:scaleX(1.0581);">B:</span>
<span class="t" style="left:194.1px;top:1202.5px;font-size:18.5px;color:#868686;transform:scaleX(1.0683);">0</span>
<span class="t" style="left:214.0px;top:1202.5px;font-size:18.5px;color:#868686;transform:scaleX(1.0697);">%</span>
<span class="t" style="left:792.4px;top:1207.1px;font-size:22.5px;color:#858585;letter-spacing:0.4px;transform:scaleX(1.0283);">RGB:</span>
<span class="t" style="left:862.0px;top:1208.9px;font-size:22.5px;color:#ececec;font-family:'Liberation Mono', monospace;transform:scaleX(1.0159);">AEF100</span>
<span class="t" style="left:171.0px;top:1299.8px;font-size:25px;color:#898989;letter-spacing:0.4px;transform:scaleX(1.0438);">Цветовой Круг</span>
<span class="t" style="left:426.8px;top:1299.8px;font-size:25px;color:#898989;letter-spacing:0.4px;transform:scaleX(1.0228);">Регулировка Схемы</span>
<span class="t" style="left:733.5px;top:1299.8px;font-size:25px;color:#898989;letter-spacing:0.4px;transform:scaleX(1.0161);">Значения Цветов</span>
<span class="t" style="left:1085.1px;top:1302.3px;font-size:25px;color:#898989;letter-spacing:0.4px;transform:scaleX(0.9930);">Просмотр схемы</span>
<span class="t" style="left:1403.1px;top:1302.3px;font-size:25px;color:#898989;letter-spacing:0.4px;">Пример светлой страницы</span>
<span class="t" style="left:1786.8px;top:1302.3px;font-size:25px;color:#898989;letter-spacing:0.4px;transform:scaleX(0.9914);">Пример тёмной страницы</span>
<span class="t" style="left:1847.3px;top:1227.3px;font-size:18.5px;color:#585858;letter-spacing:0.2px;transform:scaleX(1.0755);">Показать образец текста</span>
<span class="t" style="left:317.4px;top:1389.6px;font-size:56.5px;color:#b2aaa6;transform:scaleX(1.0285);">2016 новинка сексуальные женщины...</span>
<span class="t" style="left:317.4px;top:1465.0px;font-size:38px;color:#d2d2d2;font-weight:700;transform:scaleX(1.0913);">8,98 руб</span>
<span class="t" style="left:317.4px;top:1519.8px;font-size:33px;color:#b8991b;transform:scaleX(1.0700);">AliExpress.com</span>
<span class="t" style="left:430.2px;top:1593.7px;font-size:24.5px;color:#565656;letter-spacing:0.4px;transform:scaleX(1.0631);">2002-2015 © Color Scheme Designer • ColorScheme.Ru •</span>
<span class="t" style="left:1133.3px;top:1593.7px;font-size:24.5px;color:#6b6b6b;text-decoration:underline;letter-spacing:0.4px;transform:scaleX(1.0260);">Поддержать Проект</span>
<span class="t" style="left:1382.0px;top:1593.7px;font-size:24.5px;color:#565656;transform:scaleX(1.2823);">•</span>
<span class="t" style="left:1402.0px;top:1593.7px;font-size:24.5px;color:#6b6b6b;text-decoration:underline;letter-spacing:0.4px;transform:scaleX(1.0135);">Установить на Сайт</span>
<span class="t" style="left:1647.0px;top:1593.7px;font-size:24.5px;color:#565656;transform:scaleX(1.2823);">•</span>
<span class="t" style="left:1666.5px;top:1593.7px;font-size:24.5px;color:#6b6b6b;text-decoration:underline;letter-spacing:0.4px;transform:scaleX(1.0302);">Отключить Рекламу</span>
<span class="t" style="left:1917.0px;top:1593.7px;font-size:24.5px;color:#565656;transform:scaleX(1.2823);">•</span>
<span class="t" style="left:1938.5px;top:1593.7px;font-size:24.5px;color:#6b6b6b;text-decoration:underline;letter-spacing:0.4px;transform:scaleX(1.0269);">Обратная Связь</span>
</body></html>
